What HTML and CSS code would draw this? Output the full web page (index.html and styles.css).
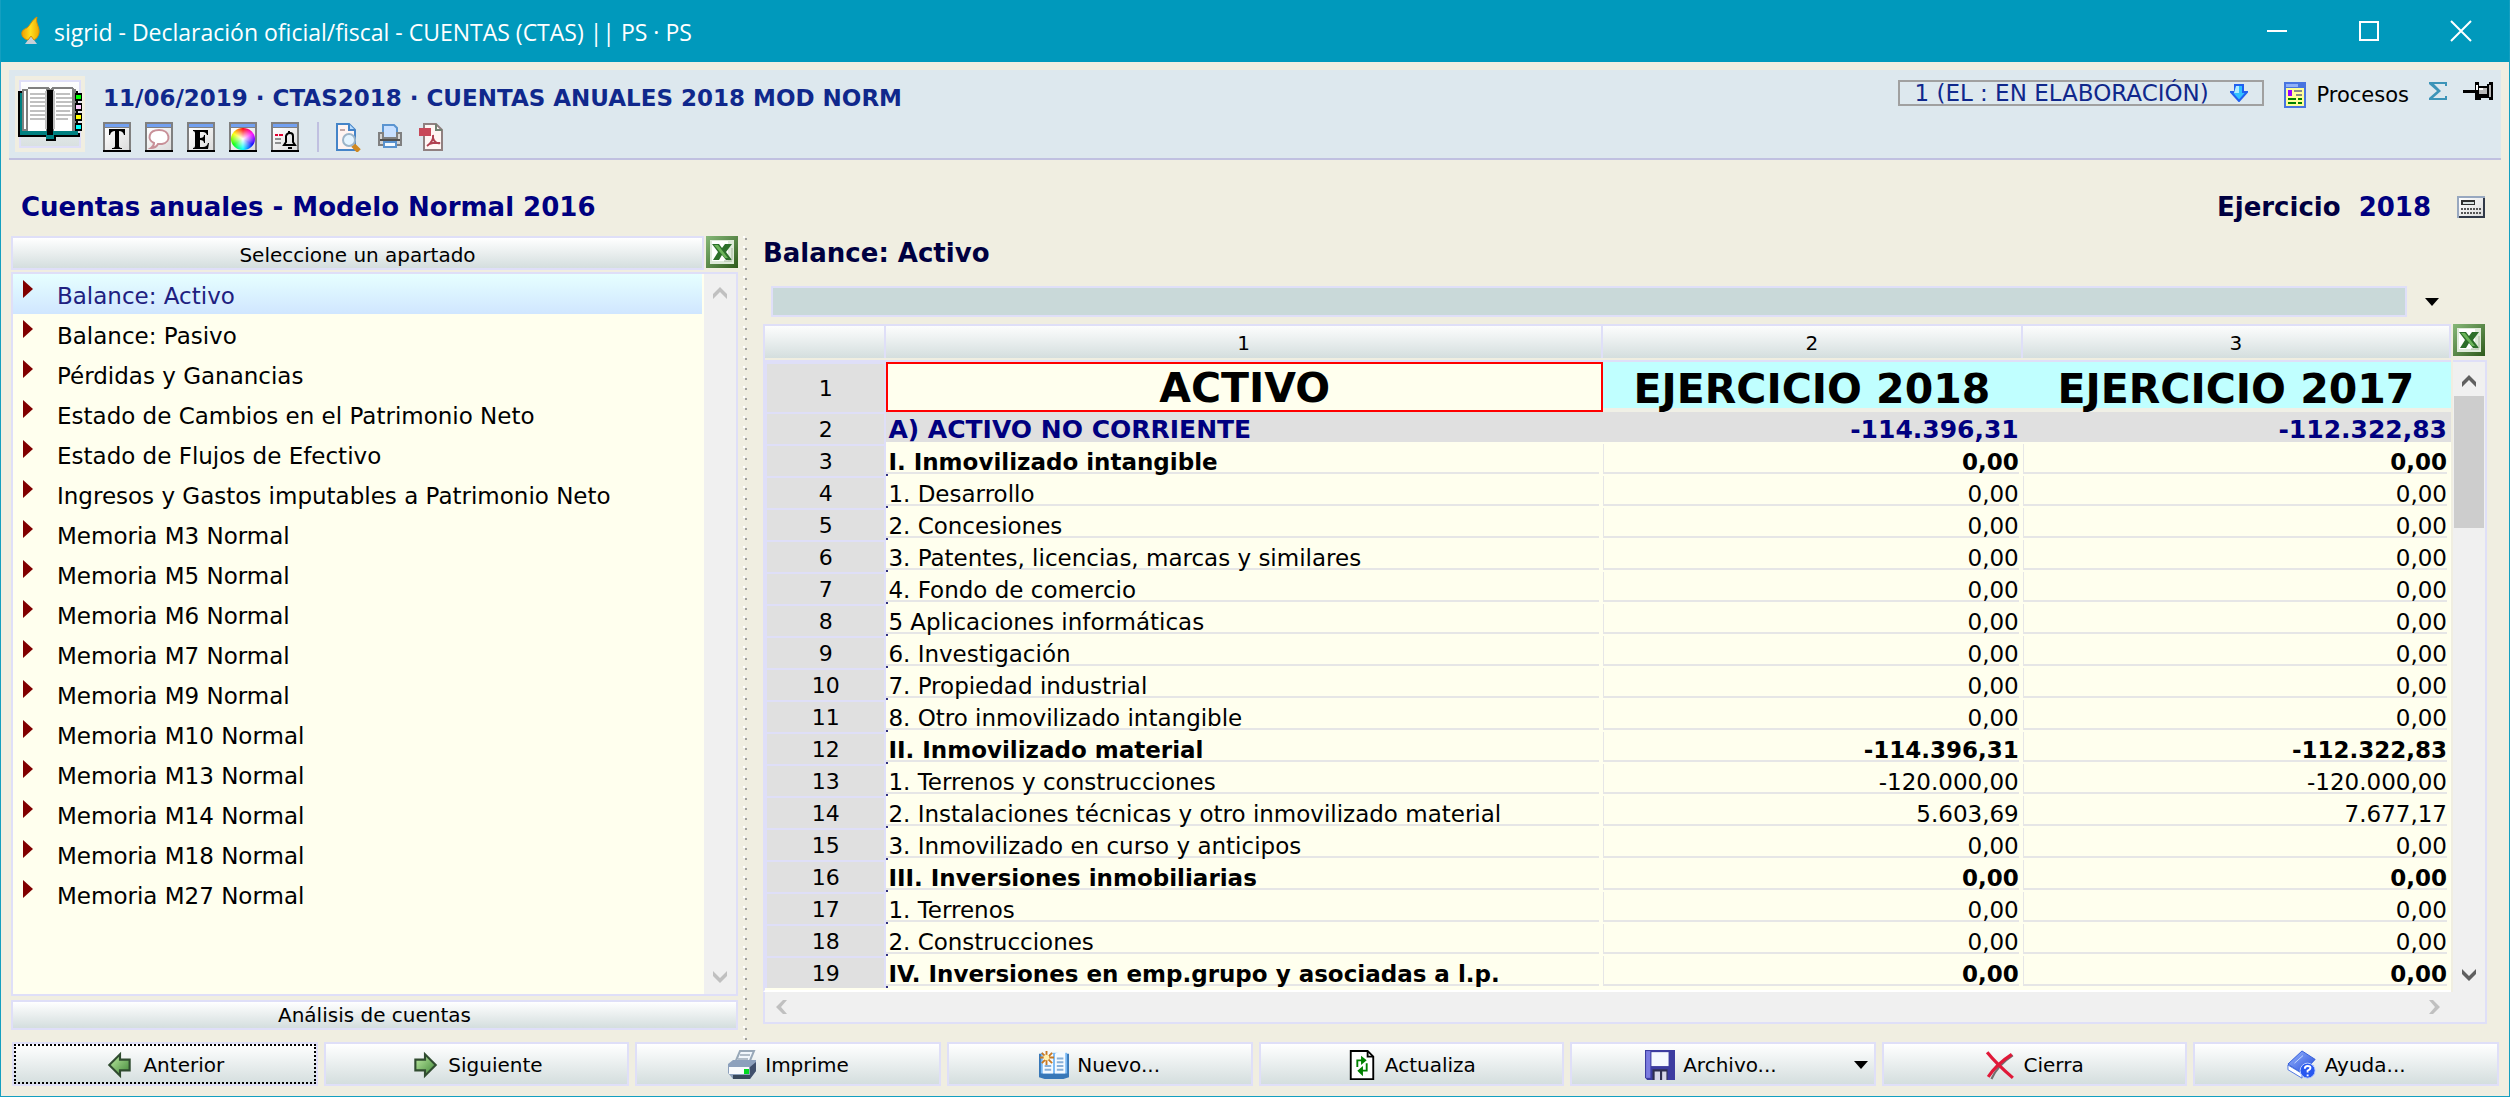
FILE: index.html
```html
<!DOCTYPE html>
<html lang="es">
<head>
<meta charset="utf-8">
<title>sigrid - Declaración oficial/fiscal</title>
<link rel="stylesheet" href="styles.css">
</head>
<body>
<svg class="defs" aria-hidden="true">
  <defs>
    <linearGradient id="gExcel" x1="0" y1="0" x2="1" y2="1"><stop offset="0" stop-color="#86b878"/><stop offset="1" stop-color="#2f5a1c"/></linearGradient>
    <linearGradient id="gPaper" x1="0" y1="0" x2="1" y2="1"><stop offset="0" stop-color="#ffffff"/><stop offset="1" stop-color="#dcdcdc"/></linearGradient>
    <linearGradient id="gGreen" x1="0" y1="0" x2="1" y2="1"><stop offset="0" stop-color="#c4f0a8"/><stop offset="1" stop-color="#3c8434"/></linearGradient>
    <linearGradient id="gBlue" x1="0" y1="0" x2="1" y2="1"><stop offset="0" stop-color="#9ab8ff"/><stop offset="1" stop-color="#2048d8"/></linearGradient>
    <linearGradient id="gFlame" x1="0" y1="0" x2="1" y2="0"><stop offset="0" stop-color="#f0a000"/><stop offset="0.5" stop-color="#ffe020"/><stop offset="1" stop-color="#f0a800"/></linearGradient>
    <symbol id="excel" viewBox="0 0 32 32">
      <path fill="url(#gExcel)" d="M0 0h32v32H0z"/><path fill="#dfeada" d="M4 4h24v24H4z"/><path fill="#fff" d="M6 5h16v20H6z"/>
      <path fill="#2c6e2a" d="M6 8h7l3 4 3-4h7l-6 8 6 8h-6l-4-5-3 5H7l5-8z"/><path fill="#6cb45a" d="M8 9h4l10 13h-3z"/>
      <path fill="none" stroke="#a8b8a0" d="M18 25h8M26 12v12"/>
    </symbol>
    <symbol id="up" viewBox="0 0 16 14"><path fill="currentColor" d="M8 1l7 7v5l-7-7-7 7V8z"/></symbol>
    <symbol id="down" viewBox="0 0 16 14"><path fill="currentColor" d="M8 13l7-7V1L8 8 1 1v5z"/></symbol>
    <symbol id="left" viewBox="0 0 14 16"><path fill="currentColor" d="M1 8l7-7h4L6 8l6 7H8z"/></symbol>
    <symbol id="right" viewBox="0 0 14 16"><path fill="currentColor" d="M13 8L6 1H2l6 7-6 7h4z"/></symbol>
    <symbol id="frame" viewBox="0 0 28 30"><path fill="#000" d="M0 0h28v30H0z"/><path fill="#808080" d="M0 0h28v28H0z"/><path fill="#72a0f0" d="M2 2h24v3H2z"/><path fill="url(#gPaper)" d="M2 6h24v22H2z"/></symbol>
  </defs>
</svg>

<div class="window">
  <header class="titlebar">
    <svg class="flame" viewBox="0 0 22 30"><path fill="#c8d0d8" d="M5 28l6-8 6 8z"/><path fill="url(#gFlame)" stroke="#e09000" d="M17 1c-2 6 3 10 2 16-1 4-3 6-5 7l-3-4-3 4c-4-1-7-4-6-8 1-3 4-3 6-5C11 8 12 4 17 1z"/></svg>
    <h1>sigrid - Declaración oficial/fiscal - CUENTAS (CTAS) || PS · PS</h1>
    <div class="winctl">
      <button aria-label="Minimizar"><svg viewBox="0 0 20 20"><path d="M0 10h20"/></svg></button>
      <button aria-label="Maximizar"><svg viewBox="0 0 20 20"><path d="M1 1h18v18H1z"/></svg></button>
      <button aria-label="Cerrar"><svg viewBox="0 0 20 20"><path d="M0 0l20 20M20 0L0 20"/></svg></button>
    </div>
  </header>

  <section class="record">
    <div class="book">
      <svg viewBox="0 0 64 54" shape-rendering="crispEdges">
        <path fill="#000" d="M0 4h60v42h2v4H38v4H28v-4H0z"/><path fill="#008080" d="M2 6h4v38h54v4H36v4h-8v-4H2z"/>
        <path fill="#808080" d="M4 2h6V0h20l2 2 2-2h20l2 2h2v42H4z"/>
        <path fill="#fff" d="M6 4h2v38H6zM10 2h18v42H10zM36 2h18v42H36z"/><path fill="#000" d="M29 3h6v45h-6z"/><path fill="#c0c0c0" d="M27 4h2v38h-2zM35 4h2v38h-2z"/>
        <path stroke="#c0c0c0" stroke-width="2" d="M12 7h15M12 11h15M12 15h15M12 19h15M12 24h15M12 28h15M12 32h15M38 7h14M38 11h16M38 15h16M38 19h16M38 24h14M38 28h16M38 32h12"/>
        <path fill="#000" d="M57 6h7v8h-7zM57 16h7v8h-7zM57 26h7v8h-7zM57 36h7v8h-7z"/>
        <path fill="#0f0" d="M58 8h5v4h-5z"/><path fill="#fcf" d="M58 18h5v4h-5z"/><path fill="#ff0" d="M58 28h5v4h-5z"/><path fill="#0ff" d="M58 38h5v4h-5z"/>
      </svg>
    </div>
    <div class="record-main">
      <h2>11/06/2019 · CTAS2018 · CUENTAS ANUALES 2018 MOD NORM</h2>
      <div class="tools">
        <button aria-label="Texto"><svg viewBox="0 0 28 30"><use href="#frame"/><path fill="#000" d="M6 7h16v6h-1q-1-4-5-4v15q0 2 3 2v1H9v-1q3 0 3-2V9q-4 0-5 4H6z"/></svg></button>
        <button aria-label="Nota"><svg viewBox="0 0 28 30"><use href="#frame"/><path fill="#fff" stroke="#c89098" stroke-width="2" d="M9 21C2 18 3 8 14 8s13 12 3 14h-4q-2 4-7 4 3-2 3-5z"/></svg></button>
        <button aria-label="Estado"><svg viewBox="0 0 28 30"><use href="#frame"/><path fill="#000" d="M6 8h15v5h-1q-1-3-4-3h-3v6q4 0 4-3h1v8h-1q0-3-4-3v7h3q4 0 5-4h1l-1 6H6v-1q2 0 2-2V11q0-2-2-2z"/></svg></button>
        <button aria-label="Color"><svg viewBox="0 0 28 30"><use href="#frame"/></svg><i class="wheel"></i></button>
        <button aria-label="Aviso"><svg viewBox="0 0 28 30"><use href="#frame"/><path stroke="#e00030" stroke-width="2" d="M4 13h3M8 13h4"/><path stroke="#909090" stroke-width="2" d="M4 17h6M4 21h6"/><path fill="none" stroke="#000" stroke-width="2" d="M13 23h11l-2-3v-6q0-3-3-3t-4 3v6zM18 9v2M17 26h4"/></svg></button>
        <span class="sep"></span>
        <button aria-label="Vista previa"><svg viewBox="0 0 28 30"><path fill="#fff4f2" stroke="#4484c8" stroke-width="2" d="M3 2h12l6 6v20H3z"/><path fill="#b8dcff" stroke="#4484c8" stroke-width="2" d="M15 2v6h6"/><path stroke="#c0a8a8" stroke-width="2" d="M6 8h5"/><path stroke="#d08820" stroke-width="5" d="M19 23l6 6"/><circle cx="15" cy="18" r="6" fill="#e4f4ff" stroke="#9cb4c8" stroke-width="2"/></svg></button>
        <button aria-label="Imprimir"><svg viewBox="0 0 28 30"><path fill="#c8e0ff" stroke="#5a94d0" stroke-width="2" d="M7 16V3h11l3 3v10z"/><path fill="#d4d4d4" stroke="#808080" stroke-width="2" d="M7 11H3v12h22V11h-4v5H7z"/><path stroke="#505050" stroke-width="2" d="M4 18h20"/><path fill="#f4faff" stroke="#5a94d0" stroke-width="2" d="M8 20h12v5H8z"/></svg></button>
        <button aria-label="PDF"><svg viewBox="0 0 28 30"><path fill="#fff6f4" stroke="#908080" stroke-width="2" d="M6 2h12l6 6v20H6z"/><path fill="none" stroke="#708070" stroke-width="2" d="M18 2v6h6"/><path fill="#c84858" d="M1 6h12v8H1z"/><path fill="none" stroke="#b04050" stroke-width="2" d="M15 13q1 6-6 11M15 16q2 6 7 5-5-1-11 1"/></svg></button>
      </div>
    </div>
    <div class="record-side">
      <button class="status">1 (EL : EN ELABORACIÓN)
        <svg viewBox="0 0 18 18"><path fill="#30c0ff" stroke="#2060f0" stroke-width="2" d="M5 1h8v7h4l-8 9-8-9h4z"/><path fill="#b0ecff" d="M6 2h3v7H4z"/></svg></button>
      <button class="proc"><svg viewBox="0 0 22 26" shape-rendering="crispEdges"><path fill="#4874e0" d="M0 0h22v26H0z"/><path fill="#90b0f8" d="M2 2h12v3H2z"/><path fill="#ffff98" d="M2 6h18v18H2z"/><path fill="#90f" d="M4 8h4v6H4z"/><path stroke="#888" stroke-width="2" d="M10 9h8M12 13h6"/><path stroke="#008000" stroke-width="2" d="M4 17h8M14 17h4M4 21h8M14 21h4"/></svg>Procesos</button>
      <button aria-label="Suma"><svg class="sigma" viewBox="0 0 18 18"><path fill="#3c94b8" d="M0 0h18v4h-2V2H5l7 7-8 7h12v-2h2v4H0v-2l8-7-8-7z"/></svg></button>
      <button aria-label="Fijar"><svg class="pin" viewBox="0 0 30 20" shape-rendering="crispEdges"><path fill="#000" d="M0 8h12V0h4v4h8V2h2V0h4v18h-4v-2h-8v2h-6v-7H0z"/><path fill="#b8b8b8" d="M16 6h8v6h-8zM26 3h2v12h-2z"/><path fill="#fff" d="M16 6h4v2h-4zM13 3h2v5h-2z"/></svg></button>
    </div>
  </section>

  <section class="heading">
    <h2>Cuentas anuales - Modelo Normal 2016</h2>
    <p><span>Ejercicio</span> <b>2018</b></p>
    <button aria-label="Calculadora"><svg viewBox="0 0 28 22" shape-rendering="crispEdges"><path fill="#303848" d="M0 0h28v22H0z"/><path fill="#98a8c0" d="M0 0h28v2H2v20H0z"/><path fill="url(#gPaper)" d="M2 2h24v18H2z"/><path fill="#303030" d="M4 4h14v5H4z"/><path fill="#d8e0e0" d="M6 6h11v2H6z"/><path stroke="#555" stroke-width="2" stroke-dasharray="2 1" d="M4 13h20M4 17h20"/></svg></button>
  </section>

  <main>
    <aside>
      <div class="aside-head">
        <button class="bar">Seleccione un apartado</button>
        <button aria-label="Exportar apartados a Excel"><svg class="xl"><use href="#excel"/></svg></button>
      </div>
      <div class="list">
        <ul>
          <li class="on"><a href="#">Balance: Activo</a></li>
          <li><a href="#">Balance: Pasivo</a></li>
          <li><a href="#">Pérdidas y Ganancias</a></li>
          <li><a href="#">Estado de Cambios en el Patrimonio Neto</a></li>
          <li><a href="#">Estado de Flujos de Efectivo</a></li>
          <li><a href="#">Ingresos y Gastos imputables a Patrimonio Neto</a></li>
          <li><a href="#">Memoria M3 Normal</a></li>
          <li><a href="#">Memoria M5 Normal</a></li>
          <li><a href="#">Memoria M6 Normal</a></li>
          <li><a href="#">Memoria M7 Normal</a></li>
          <li><a href="#">Memoria M9 Normal</a></li>
          <li><a href="#">Memoria M10 Normal</a></li>
          <li><a href="#">Memoria M13 Normal</a></li>
          <li><a href="#">Memoria M14 Normal</a></li>
          <li><a href="#">Memoria M18 Normal</a></li>
          <li><a href="#">Memoria M27 Normal</a></li>
        </ul>
        <div class="vscroll off"><svg><use href="#up"/></svg><svg class="end"><use href="#down"/></svg></div>
      </div>
      <button class="bar">Análisis de cuentas</button>
    </aside>

    <div class="splitter"></div>

    <section class="sheet">
      <h2>Balance: Activo</h2>
      <div class="combo">
        <select aria-label="Contenido de la celda"><option></option></select>
        <svg viewBox="0 0 14 8"><path d="M0 0h14L7 8z"/></svg>
      </div>
      <div class="grid">
        <div class="cells">
          <table>
            <colgroup><col class="c0"><col class="c1"><col class="c2"><col class="c3"></colgroup>
            <thead><tr><th></th><th>1</th><th>2</th><th>3</th></tr></thead>
            <tbody>
              <tr class="cap"><th>1</th><td class="sel">ACTIVO</td><td>EJERCICIO 2018</td><td>EJERCICIO 2017</td></tr>
              <tr class="total"><th>2</th><td>A) ACTIVO NO CORRIENTE</td><td>-114.396,31</td><td>-112.322,83</td></tr>
              <tr class="group"><th>3</th><td>I. Inmovilizado intangible</td><td>0,00</td><td>0,00</td></tr>
              <tr><th>4</th><td>1. Desarrollo</td><td>0,00</td><td>0,00</td></tr>
              <tr><th>5</th><td>2. Concesiones</td><td>0,00</td><td>0,00</td></tr>
              <tr><th>6</th><td>3. Patentes, licencias, marcas y similares</td><td>0,00</td><td>0,00</td></tr>
              <tr><th>7</th><td>4. Fondo de comercio</td><td>0,00</td><td>0,00</td></tr>
              <tr><th>8</th><td>5 Aplicaciones informáticas</td><td>0,00</td><td>0,00</td></tr>
              <tr><th>9</th><td>6. Investigación</td><td>0,00</td><td>0,00</td></tr>
              <tr><th>10</th><td>7. Propiedad industrial</td><td>0,00</td><td>0,00</td></tr>
              <tr><th>11</th><td>8. Otro inmovilizado intangible</td><td>0,00</td><td>0,00</td></tr>
              <tr class="group"><th>12</th><td>II. Inmovilizado material</td><td>-114.396,31</td><td>-112.322,83</td></tr>
              <tr><th>13</th><td>1. Terrenos y construcciones</td><td>-120.000,00</td><td>-120.000,00</td></tr>
              <tr><th>14</th><td>2. Instalaciones técnicas y otro inmovilizado material</td><td>5.603,69</td><td>7.677,17</td></tr>
              <tr><th>15</th><td>3. Inmovilizado en curso y anticipos</td><td>0,00</td><td>0,00</td></tr>
              <tr class="group"><th>16</th><td>III. Inversiones inmobiliarias</td><td>0,00</td><td>0,00</td></tr>
              <tr><th>17</th><td>1. Terrenos</td><td>0,00</td><td>0,00</td></tr>
              <tr><th>18</th><td>2. Construcciones</td><td>0,00</td><td>0,00</td></tr>
              <tr class="group"><th>19</th><td>IV. Inversiones en emp.grupo y asociadas a l.p.</td><td>0,00</td><td>0,00</td></tr>
            </tbody>
          </table>
        </div>
        <div class="grid-side">
          <button aria-label="Exportar tabla a Excel"><svg class="xl"><use href="#excel"/></svg></button>
          <div class="vscroll"><svg><use href="#up"/></svg><div class="thumb"></div><svg class="end"><use href="#down"/></svg></div>
        </div>
      </div>
      <div class="hscroll"><svg><use href="#left"/></svg><svg><use href="#right"/></svg></div>
    </section>
  </main>

  <footer>
    <button class="focus"><svg viewBox="0 0 28 28"><path fill="url(#gGreen)" stroke="#304c30" stroke-width="2" d="M4 14L14 4v5h9v10h-9v5z"/></svg>Anterior</button>
    <button><svg viewBox="0 0 28 28"><path fill="url(#gGreen)" stroke="#304c30" stroke-width="2" d="M24 14L14 4v5H5v10h9v5z"/></svg>Siguiente</button>
    <button><svg viewBox="0 0 30 30"><path fill="#f0f6fc" stroke="#98a8b8" stroke-width="2" d="M8 13l5-12h14l-5 12z"/><path stroke="#b0bcc8" stroke-width="2" d="M13 5h10M11 9h10"/><path fill="#8ca0bc" d="M1 14l5-4h23v11l-6 8H6l-5-6z"/><path fill="#40506c" d="M23 17l6-5v9l-6 8z"/><path fill="#f8fafc" d="M2 17h20v7H2z"/><path fill="#00d820" d="M17 19h5v5h-5z"/><path fill="#38485c" d="M6 25h17v4H6z"/></svg>Imprime</button>
    <button><svg viewBox="0 0 32 30"><path fill="#3878b8" d="M0 3h32v25l-6 2H6l-6-2z"/><path fill="#78b8f4" d="M2 2h28v22H2z"/><path fill="#f4faff" d="M4 1q8-1 11 2v21H4zM28 1q-8-1-11 2v21h11z"/><path stroke="#88b0d8" stroke-width="2" d="M6 16h7M6 20h7M19 8h7M19 12h7M19 16h7M19 20h7"/><path stroke="#c87820" stroke-width="2" d="M8 0v15M1 7h15M3 2l11 11M14 2L3 13"/><circle cx="8" cy="7" r="3" fill="#fff0b0"/></svg>Nuevo...</button>
    <button><svg viewBox="0 0 28 32"><path fill="#fff" stroke="#000" stroke-width="2" d="M2 1h18l6 6v24H2z"/><path fill="none" stroke="#000" stroke-width="2" d="M20 1v6h6"/><path fill="none" stroke="#008000" stroke-width="2" d="M9 18v-7h5M19 14v8h-5"/><path fill="#008000" d="M13 6l6 5-6 5zM15 17l-6 5 6 6z"/></svg>Actualiza</button>
    <button class="has-menu"><svg viewBox="0 0 28 28"><path fill="#3c3ca0" d="M0 0h28v28H2l-2-2z"/><path fill="#7c7ce0" d="M1 1h4v25H1z"/><path fill="#f4f8ff" d="M6 2h16v13H6z"/><path fill="#303050" d="M7 18h14v10H7z"/><path fill="#d8d8e8" d="M9 20h5v8H9zM16 20h4v8h-4z"/></svg>Archivo...<svg class="drop" viewBox="0 0 14 8"><path d="M0 0h14L7 8z"/></svg></button>
    <button><svg viewBox="0 0 28 28"><path fill="none" stroke="#707070" stroke-width="2" d="M26 5Q12 14 6 27"/><path fill="none" stroke="#e01838" stroke-width="3" d="M2 2q8 10 24 24M25 4Q11 13 3 25"/></svg>Cierra</button>
    <button><svg viewBox="0 0 32 32"><path fill="url(#gBlue)" stroke="#2c58d8" d="M1 15L16 1l14 9-14 15z"/><path fill="#fff" stroke="#4870e0" d="M1 16v5l15 9v-5z"/><path fill="none" stroke="#c8dcff" d="M8 14l9-8"/><circle cx="22" cy="22" r="8" fill="#2858f0" stroke="#c0d4ff"/><path fill="none" stroke="#fff" stroke-width="2" d="M19 20q0-3 3-3t3 2q0 2-3 3v2M22 26v2"/></svg>Ayuda...</button>
  </footer>
</div>
</body>
</html>
```
FILE: styles.css
```css
* { box-sizing: border-box; }

body {
  margin: 0;
  font: 23px "DejaVu Sans", Verdana, sans-serif;
  color: #000;
  background: #f0eee1;
}

h1, h2, p, ul { margin: 0; padding: 0; }
h2 { font-size: 26px; line-height: 34px; font-weight: bold; color: #000080; }
svg { display: block; flex: none; }
button { font: inherit; color: inherit; margin: 0; padding: 0; border: 0; background: none; display: flex; align-items: center; }
.defs { position: absolute; width: 0; height: 0; }

.window {
  min-height: 100vh;
  display: flex;
  flex-direction: column;
  border: 1px solid #149fc0;
  border-top: 0;
}

/* Title bar */
.titlebar { display: flex; align-items: center; height: 62px; padding-left: 19px; background: #0099bc; color: #fff; }
.titlebar h1 { font: 23px/32px "Open Sans", "Segoe UI", sans-serif; padding-top: 2px; }
.flame { width: 22px; height: 30px; margin-right: 12px; }
.winctl { display: flex; margin-left: auto; padding-right: 2px; }
.winctl button { width: 92px; height: 60px; justify-content: center; }
.winctl svg { width: 20px; height: 20px; overflow: visible; fill: none; stroke: #fff; stroke-width: 2; }

/* Record header */
.record { display: flex; margin: 8px 8px 0; height: 90px; padding: 6px 8px 6px 6px; background: #dde8ee; border-bottom: 2px solid #c0c0e0; }
.book { display: flex; align-items: center; justify-content: center; width: 70px; height: 76px; border: 4px solid #f0eee1; background: linear-gradient(#fff, #d8e0e0); box-shadow: inset 0 0 0 2px #dfdff8; }
.book svg { width: 64px; height: 54px; }
.record-main { padding: 6px 0 0 18px; }
.record-main h2 { font-size: 23px; line-height: 32px; color: #10288c; }
.tools { display: flex; gap: 14px; margin-top: 8px; }
.tools button { position: relative; }
.tools svg { width: 28px; height: 30px; }
.wheel { position: absolute; left: 2px; top: 6px; width: 24px; height: 22px; border-radius: 50%; background: radial-gradient(#fff, transparent 70%), conic-gradient(red, #f0f, #00f, #0ff, #0f0, #ff0, red); }
.sep { width: 2px; margin: 0 1px 0 4px; background: #c0c0e0; }
.record-side { display: flex; align-items: flex-start; margin-left: auto; padding-top: 4px; }
.status { width: 366px; height: 26px; padding: 0 14px 0 14px; justify-content: space-between; border: 2px solid #a0a0a0; font-size: 23px; line-height: 22px; color: #10288c; }
.status svg { width: 18px; height: 18px; }
.proc { margin: 2px 20px 0; gap: 10px; font-size: 21px; line-height: 26px; }
.proc svg { width: 22px; height: 26px; }
.sigma { width: 18px; height: 18px; margin: 2px 16px 0 0; }
.pin { width: 30px; height: 20px; margin-top: 2px; }

/* Heading */
.heading { display: flex; align-items: center; height: 76px; padding: 18px 24px 0 20px; }
.heading p { display: flex; gap: 18px; margin: 0 26px 0 auto; font-size: 26px; line-height: 34px; font-weight: bold; color: #000040; }
.heading b { color: #000080; }
.heading svg { width: 28px; height: 22px; }

/* Work area */
main { flex: 1; display: flex; }
aside { width: 727px; margin: 0 5px 12px 10px; display: flex; flex-direction: column; }
.aside-head { display: flex; gap: 2px; height: 36px; align-items: flex-start; }
.bar { flex: none; height: 30px; justify-content: center; font-size: 20px; border: 2px solid #dfdff8; background: linear-gradient(#fff, #d4dede); }
.aside-head .bar { flex: 1; height: 34px; padding-top: 4px; }
.xl { width: 32px; height: 32px; }
.list { flex: 1; display: flex; gap: 2px; margin-bottom: 4px; border: 2px solid #dfdff8; background: #ffffee; }
.list ul { flex: 1; list-style: none; }
.list li { height: 40px; padding-left: 10px; display: flex; line-height: 44px; }
.list li::before { content: ""; width: 10px; height: 18px; margin: 6px 24px 0 0; background: #800000; clip-path: polygon(0 0, 100% 50%, 0 100%); }
.list a { color: #000; text-decoration: none; }
.list .on { background: linear-gradient(#e6ffff, #d0e6ff); }
.list .on a { color: #202080; }

.vscroll { width: 32px; flex: 1; display: flex; flex-direction: column; align-items: center; padding: 12px 0 10px; background: #f0f0f0; color: #606060; }
.vscroll.off { flex: none; color: #c0c0c0; }
.vscroll svg { width: 16px; height: 14px; }
.vscroll .end { margin-top: auto; }
.thumb { width: 30px; height: 132px; margin-top: 8px; background: #cdcdcd; }

.splitter { width: 4px; margin: 0 0 2px; background: conic-gradient(from 0deg at 2px 2px, transparent 75%, #fff 0) 0 0 / 10px 10px repeat-y, conic-gradient(from 0deg at 2px 2px, transparent 75%, #a0a0a0 0) 2px 2px / 10px 10px repeat-y; }

/* Spreadsheet */
.sheet { flex: 1; min-width: 0; display: flex; flex-direction: column; margin: 0 22px 18px 16px; }
.sheet h2 { color: #000040; }
.combo { display: flex; align-items: center; gap: 18px; margin: 16px 48px 7px 8px; }
.combo select { flex: 1; height: 31px; appearance: none; border: 2px solid #dfdff8; border-radius: 0; background: #c9d9d9; }
.combo svg { width: 14px; height: 8px; }
.grid { flex: 1; display: flex; gap: 2px; }
.cells { flex: 1; border-left: 2px solid #dfdff8; background: #ffffee; border-bottom: 2px solid #fff; }
.grid-side { display: flex; flex-direction: column; width: 34px; }
.grid-side .vscroll { margin-top: 4px; border: solid #dfdff8; border-width: 2px 2px 0 0; width: 34px; padding: 12px 0 10px; }
.hscroll { height: 32px; display: flex; justify-content: space-between; align-items: center; padding: 0 44px 0 10px; border: 2px solid #dfdff8; border-top: 0; background: #f0f0f0; color: #c0c0c0; }
.hscroll svg { width: 14px; height: 16px; }

table { width: 100%; table-layout: fixed; border-collapse: separate; border-spacing: 0; }
.c0 { width: 7.2%; }
.c1 { width: 42.5%; }
.c2 { width: 24.9%; }
.c3 { width: 25.4%; }
th, td { padding: 3px 4px 0 2px; line-height: 28px; white-space: nowrap; overflow: hidden; }
th { font-weight: normal; text-align: center; }
thead th {
  height: 38px;
  padding-bottom: 4px;
  font-size: 20px;
  background:
    linear-gradient(#dfdff8, #dfdff8) 0 0 / 100% 2px no-repeat,
    linear-gradient(#dfdff8, #dfdff8) 100% 0 / 2px 34px no-repeat,
    linear-gradient(#fff, #d4dede) 0 0 / 100% 34px no-repeat,
    linear-gradient(#dfdff8, #dfdff8) 0 100% / 100% 2px no-repeat,
    #f0eee1;
}
tbody th { height: 32px; font-size: 22px; background: #e0e0e0; border: solid #dfdff8; border-width: 2px 2px 0 2px; padding: 2px 2px 0; }
td {
  height: 32px;
  text-align: right;
  background:
    linear-gradient(#e6e6e6, #e6e6e6) 0 0 / 1px calc(100% - 2px) no-repeat,
    linear-gradient(#e6e6e6, #e6e6e6) 0 calc(100% - 2px) / calc(100% - 4px) 2px no-repeat,
    #ffffee;
}
th + td {
  text-align: left;
  background:
    linear-gradient(#303080, #303080) 0 100% / 2px 2px no-repeat,
    linear-gradient(#e6e6e6, #e6e6e6) 0 calc(100% - 2px) / calc(100% - 4px) 2px no-repeat,
    #ffffee;
}
.group td { font-weight: bold; }
.total td { font-weight: bold; font-size: 25px; color: #000080; background: linear-gradient(#e0e0e0, #e0e0e0) 0 0 / 100% 30px no-repeat, #ffffee; }
.cap td { height: 50px; font-size: 41px; line-height: 46px; font-weight: bold; text-align: center; background: linear-gradient(#c0ffff, #c0ffff) 0 0 / 100% 46px no-repeat, #f0f0e6; }
.cap .sel { border: 2px solid #f00; padding: 1px 0 0; line-height: 44px; background: #ffffee; }

/* Bottom buttons */
footer { display: grid; grid-template-columns: repeat(8, 1fr); gap: 6px; padding: 0 10px 10px 11px; }
footer button { position: relative; height: 44px; justify-content: center; gap: 8px; padding-top: 2px; font-size: 20px; border: 2px solid #dfdff8; background: linear-gradient(#fff, #d4dede); }
footer svg { width: 30px; height: 30px; }
footer .focus { outline: 2px dotted #000; outline-offset: -4px; }
footer .has-menu { padding-right: 24px; }
footer .drop { position: absolute; right: 6px; top: 17px; width: 14px; height: 8px; }
```
